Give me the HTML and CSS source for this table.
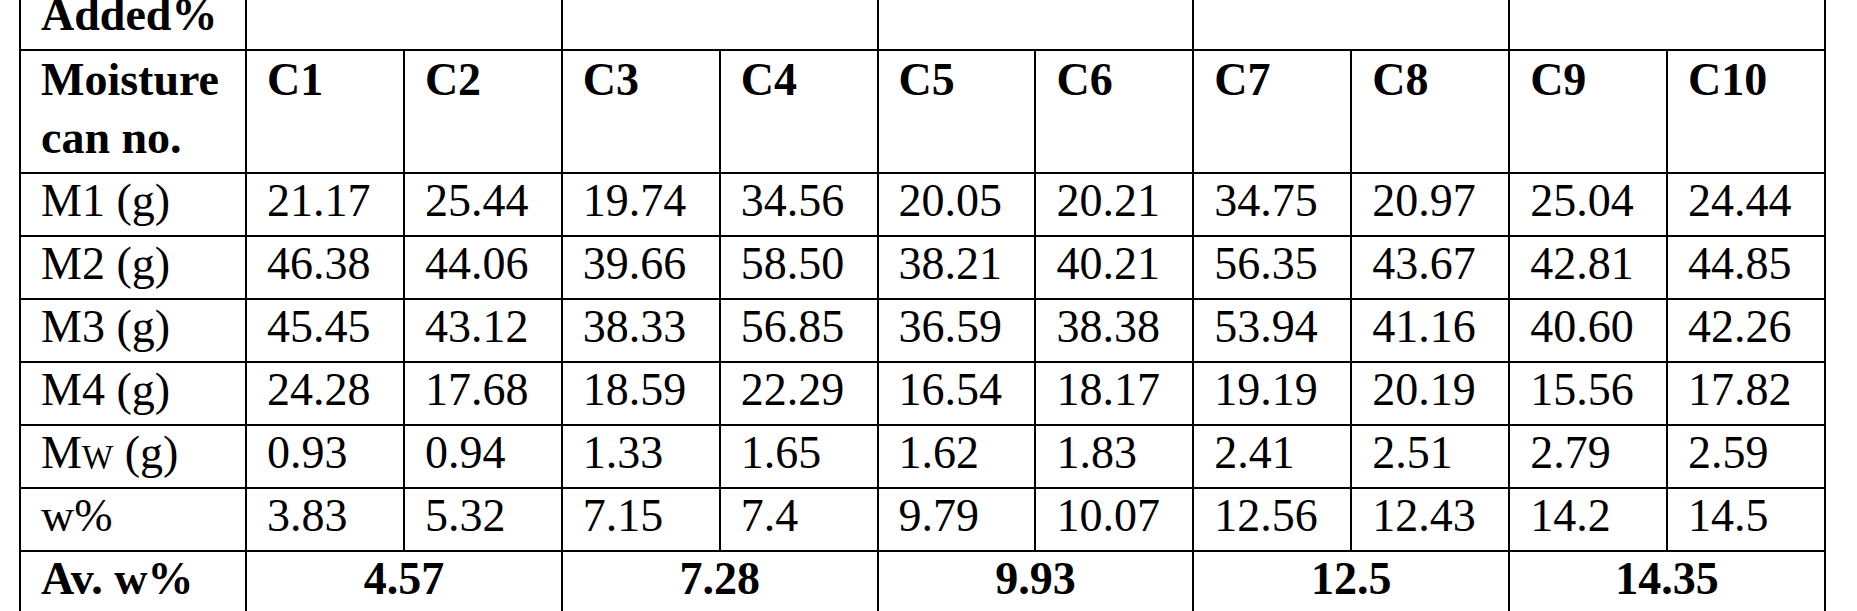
FILE: index.html
```html
<!DOCTYPE html>
<html lang="en">
<head>
    <meta charset="UTF-8">
    <meta name="viewport" content="width=device-width, initial-scale=1.0">
    <title>Moisture Content Table</title>
    <link rel="stylesheet" href="styles.css">
</head>
<body>

    <!-- Moisture content results -->
    <table class="moisture-table">
        <colgroup>
            <col class="label-col">
            <col span="10" class="can-col">
        </colgroup>

        <!-- Added water -->
        <tr class="row-added">
            <th>Added%</th>
            <td colspan="2"></td>
            <td colspan="2"></td>
            <td colspan="2"></td>
            <td colspan="2"></td>
            <td colspan="2"></td>
        </tr>

        <!-- Can numbers -->
        <tr class="row-cans">
            <th>Moisture<br>can no.</th>
            <th>C1</th><th>C2</th><th>C3</th><th>C4</th><th>C5</th>
            <th>C6</th><th>C7</th><th>C8</th><th>C9</th><th>C10</th>
        </tr>

        <tr>
            <td>M1 (g)</td>
            <td>21.17</td><td>25.44</td><td>19.74</td><td>34.56</td><td>20.05</td>
            <td>20.21</td><td>34.75</td><td>20.97</td><td>25.04</td><td>24.44</td>
        </tr>
        <tr>
            <td>M2 (g)</td>
            <td>46.38</td><td>44.06</td><td>39.66</td><td>58.50</td><td>38.21</td>
            <td>40.21</td><td>56.35</td><td>43.67</td><td>42.81</td><td>44.85</td>
        </tr>
        <tr>
            <td>M3 (g)</td>
            <td>45.45</td><td>43.12</td><td>38.33</td><td>56.85</td><td>36.59</td>
            <td>38.38</td><td>53.94</td><td>41.16</td><td>40.60</td><td>42.26</td>
        </tr>
        <tr>
            <td>M4 (g)</td>
            <td>24.28</td><td>17.68</td><td>18.59</td><td>22.29</td><td>16.54</td>
            <td>18.17</td><td>19.19</td><td>20.19</td><td>15.56</td><td>17.82</td>
        </tr>
        <tr>
            <td>M<span class="small-caps">W</span> (g)</td>
            <td>0.93</td><td>0.94</td><td>1.33</td><td>1.65</td><td>1.62</td>
            <td>1.83</td><td>2.41</td><td>2.51</td><td>2.79</td><td>2.59</td>
        </tr>
        <tr>
            <td>w%</td>
            <td>3.83</td><td>5.32</td><td>7.15</td><td>7.4</td><td>9.79</td>
            <td>10.07</td><td>12.56</td><td>12.43</td><td>14.2</td><td>14.5</td>
        </tr>

        <!-- Averages -->
        <tr class="row-average">
            <th>Av. w%</th>
            <td colspan="2">4.57</td>
            <td colspan="2">7.28</td>
            <td colspan="2">9.93</td>
            <td colspan="2">12.5</td>
            <td colspan="2">14.35</td>
        </tr>
    </table>

</body>
</html>
```

FILE: styles.css
```css
/* Global Styles */
* {
    margin: 0;
    padding: 0;
    box-sizing: border-box;
}

body {
    background: #fff;
    color: #000;
    font-family: "Liberation Serif", "Times New Roman", serif;
}

/* Table */
.moisture-table {
    border-collapse: collapse;
    table-layout: fixed;
    width: 1805px;
    margin: -14px 0 0 19px;
    font-size: 46px;
}

.label-col {
    width: 226px;
}

.can-col {
    width: 157.9px;
}

.moisture-table th,
.moisture-table td {
    border: 2px solid #000;
    height: 63px;
    padding: 0 20px;
    line-height: 53px;
    text-align: left;
    vertical-align: top;
    font-weight: normal;
    white-space: nowrap;
}

.moisture-table th {
    font-weight: bold;
}

/* Header rows */
.row-cans th {
    height: 123px;
    line-height: 58px;
}

/* Average row */
.row-average td {
    text-align: center;
    font-weight: bold;
}

.small-caps {
    font-size: 0.72em;
}
```
